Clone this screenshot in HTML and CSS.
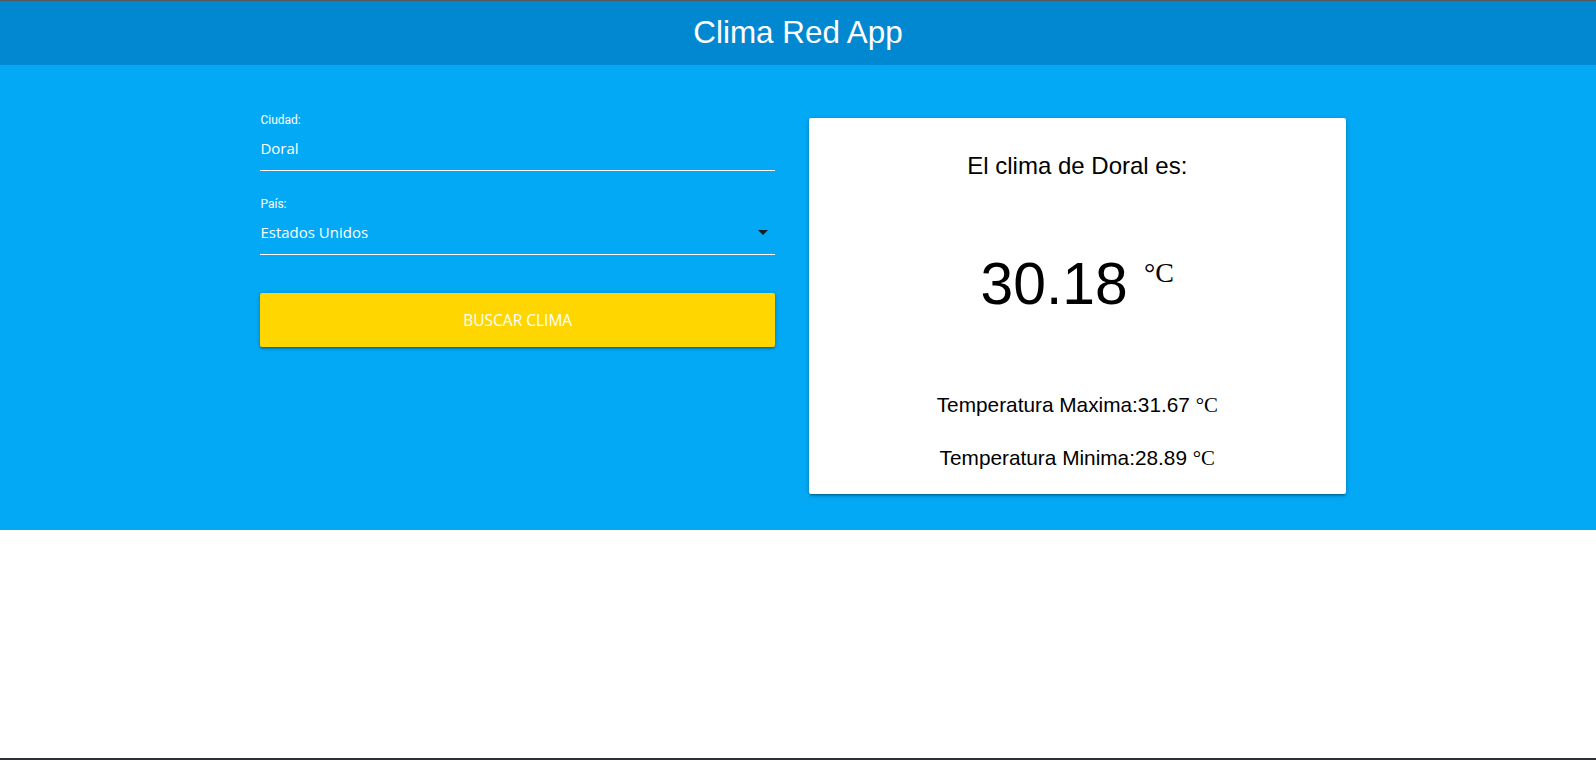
FILE: index.html
```html
<!DOCTYPE html>
<html lang="es">
<head>
<meta charset="utf-8">
<title>Clima Red App</title>
<link rel="stylesheet" href="styles.css">
</head>
<body>
<header class="topbar">
  <h1 class="brand">Clima Red App</h1>
</header>
<main class="hero">
  <div class="container">
    <div class="col">
      <form class="form">
        <div class="field">
          <label class="field-label">Ciudad:</label>
          <div class="field-input"><span class="field-value">Doral</span></div>
        </div>
        <div class="field">
          <label class="field-label">País:</label>
          <div class="field-input"><span class="field-value">Estados Unidos</span><svg class="caret" viewBox="0 0 24 24" width="24" height="24"><path d="M7 10l5 5 5-5z"/></svg></div>
        </div>
        <button class="btn" type="button">Buscar clima</button>
      </form>
    </div>
    <div class="col">
      <div class="card">
        <h2 class="card-title">El clima de Doral es:</h2>
        <p class="temp">30.18 <span class="unit-big">°C</span></p>
        <p class="range range-max">Temperatura Maxima:31.67 <span class="unit">°C</span></p>
        <p class="range range-min">Temperatura Minima:28.89 <span class="unit">°C</span></p>
      </div>
    </div>
  </div>
</main>
<div class="spacer"></div>
<div class="taskbar"></div>
</body>
</html>
```
FILE: styles.css
```css
* { box-sizing: border-box; }

html, body { height: 100%; }

body {
  margin: 0;
  min-height: 100vh;
  display: flex;
  flex-direction: column;
  font-family: "Liberation Sans", Arial, sans-serif;
  background: #ffffff;
  overflow: hidden;
}

.topbar {
  border-top: 1px solid #555a5f;
  height: 65px;
  background: #0288d1;
  display: flex;
  align-items: center;
  justify-content: center;
}

.brand {
  margin: 0;
  font-family: "Liberation Sans", Arial, sans-serif;
  font-weight: 400;
  font-size: 31.4px;
  line-height: 64px;
  color: #ffffff;
}

.hero {
  background: #03a9f4;
  padding: 48px 0 36px;
}

.container {
  width: 70%;
  margin: 0 auto;
  display: grid;
  grid-template-columns: 1fr 1fr;
  align-items: start;
}

.col {
  padding: 0 10.5px;
}

.form {
  padding: 0 12.5px 0 10.5px;
  display: flex;
  flex-direction: column;
}

.field {
  margin-bottom: 26px;
}

.field-label {
  display: block;
  font-family: Roboto, "Liberation Sans", sans-serif;
  font-size: 12px;
  line-height: 14px;
  color: #ffffff;
}

.field-input {
  display: flex;
  align-items: center;
  padding: 10px 0 11px;
  border-bottom: 1px solid #ffffff;
}

.field-value {
  flex: 1;
  font-family: "Open Sans", sans-serif;
  font-size: 15px;
  line-height: 22px;
  color: #ffffff;
}

.caret {
  margin: -1px 0;
  fill: #1b1f24;
}

.btn {
  margin-top: 12px;
  height: 54px;
  border: none;
  border-radius: 2px;
  background: #ffd600;
  color: #ffffff;
  font-family: "Open Sans", sans-serif;
  font-size: 15.5px;
  text-transform: uppercase;
  box-shadow: 0 2px 2px 0 rgba(0,0,0,0.14), 0 3px 1px -2px rgba(0,0,0,0.12), 0 1px 5px 0 rgba(0,0,0,0.2);
}

.card {
  margin-top: 5px;
  background: #ffffff;
  border-radius: 2px;
  padding: 34px 16px 24.5px;
  text-align: center;
  color: #000000;
  box-shadow: 0 2px 2px 0 rgba(0,0,0,0.14), 0 3px 1px -2px rgba(0,0,0,0.12), 0 1px 5px 0 rgba(0,0,0,0.2);
}

.card-title {
  margin: 0;
  font-weight: 400;
  font-size: 24px;
  line-height: 28px;
}

.temp {
  margin: 71px 0 0;
  font-size: 58.8px;
  line-height: 66px;
}

.unit-big {
  font-family: "Liberation Serif", "Times New Roman", serif;
  font-size: 28px;
  line-height: 1;
  vertical-align: 22px;
}

.range {
  margin: 0;
  font-size: 20.8px;
  line-height: 24px;
}

.range-max { margin-top: 76px; }
.range-min { margin-top: 28.5px; }

.unit {
  font-family: "Liberation Serif", "Times New Roman", serif;
}

.spacer {
  flex: 1;
}

.taskbar {
  height: 2px;
  background: #2d3035;
}
```
